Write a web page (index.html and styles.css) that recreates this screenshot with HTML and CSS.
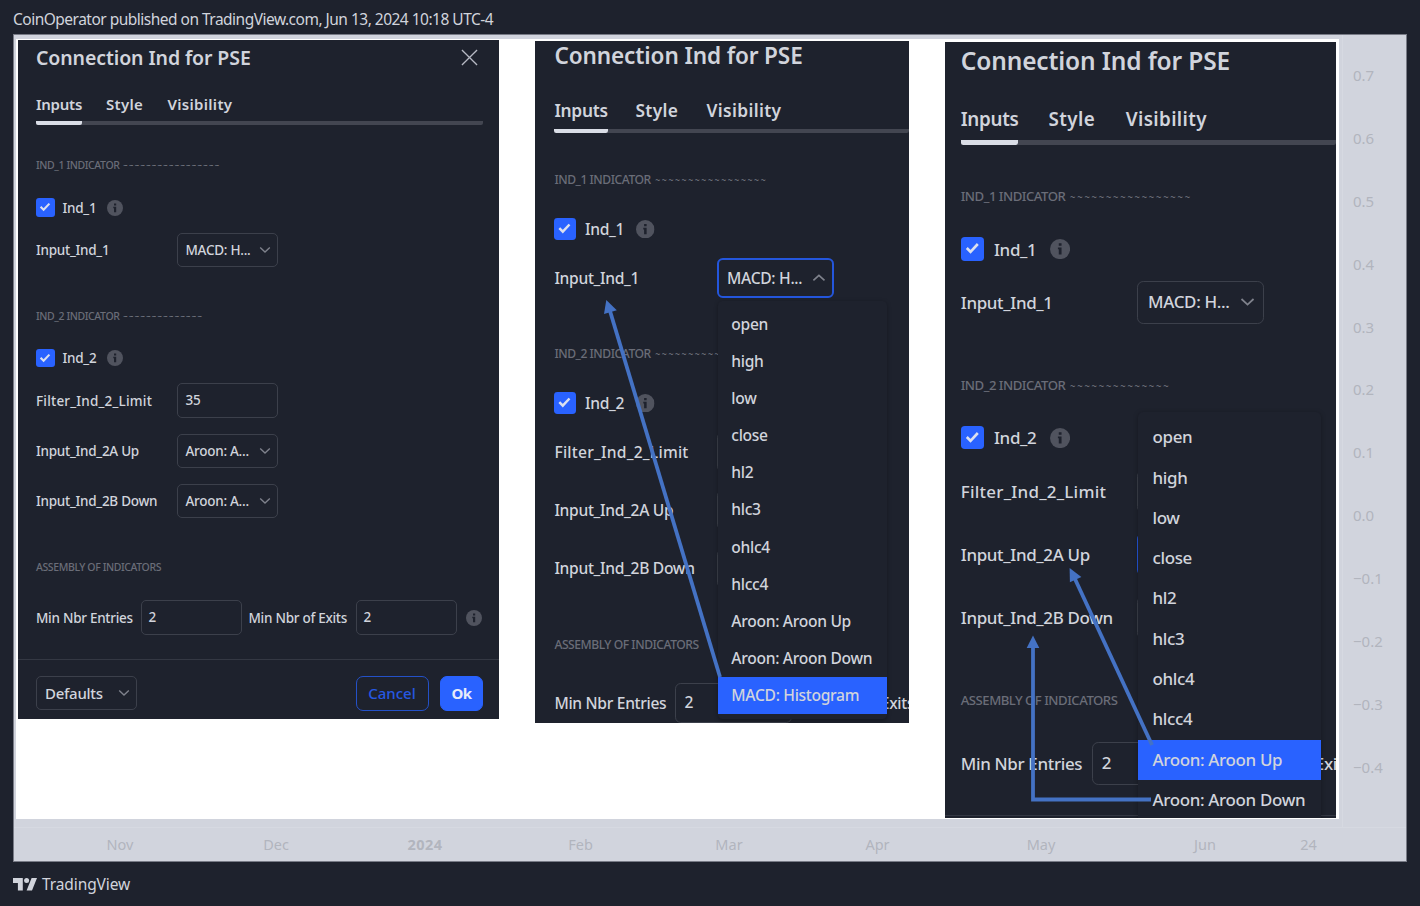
FILE: index.html
```
<!DOCTYPE html>
<html lang="en">
<head>
<meta charset="UTF-8">
<meta name="viewport" content="width=device-width, initial-scale=1.0">
<title>Connection Ind for PSE - TradingView</title>
<link rel="stylesheet" href="styles.css">
</head>
<body>

<!-- shared icons -->
<svg class="sprite" width="0" height="0">
    <symbol id="check" viewBox="0 0 18 18">
        <path d="M4.6 8.8l3 3 5.8-6.2" fill="none" stroke="#dbe0ef" stroke-width="2.1"/>
    </symbol>
    <symbol id="info" viewBox="0 0 16 16">
        <circle cx="8" cy="8" r="8" fill="#50535e"/>
        <path d="M7 3.4h2.2v2H7zM6.3 6.8h2.9v5.5H7V8.2h-.7z" fill="#1e222d"/>
    </symbol>
    <symbol id="chevron" viewBox="0 0 12 8">
        <path d="M1.2 1.6L6 6l4.8-4.4" fill="none" stroke="#7f828c" stroke-width="1.4"/>
    </symbol>
</svg>

<div class="page">
    <header class="publish-info">CoinOperator published on TradingView.com, Jun 13, 2024 10:18 UTC-4</header>

    <main class="chart">
        <div class="canvas">

            <section class="dialog dialog-full">
                <div class="title-row">
                    <h2>Connection Ind for PSE</h2>
                    <svg class="close" viewBox="0 0 18 18"><path d="M1 1l16 16M17 1L1 17" stroke="#b6b9c3" stroke-width="1.4"/></svg>
                </div>
                <nav class="tabs">
                    <span class="tab active">Inputs</span>
                    <span class="tab tab-style">Style</span>
                    <span class="tab">Visibility</span>
                </nav>
                <h3 class="first">IND_1 INDICATOR <span class="tildes">~~~~~~~~~~~~~~~~~</span></h3>
                <div class="check-row">
                    <span class="checkbox"><svg><use href="#check"/></svg></span>Ind_1<svg class="info"><use href="#info"/></svg>
                </div>
                <div class="row">
                    <label>Input_Ind_1</label>
                    <div class="select">MACD: H...<svg class="chevron"><use href="#chevron"/></svg></div>
                </div>
                <h3>IND_2 INDICATOR <span class="tildes">~~~~~~~~~~~~~~</span></h3>
                <div class="check-row">
                    <span class="checkbox"><svg><use href="#check"/></svg></span>Ind_2<svg class="info"><use href="#info"/></svg>
                </div>
                <div class="row">
                    <label class="wide">Filter_Ind_2_Limit</label>
                    <div class="field">35</div>
                </div>
                <div class="row spaced">
                    <label>Input_Ind_2A Up</label>
                    <div class="select">Aroon: A...<svg class="chevron"><use href="#chevron"/></svg></div>
                </div>
                <div class="row spaced">
                    <label>Input_Ind_2B Down</label>
                    <div class="select">Aroon: A...<svg class="chevron"><use href="#chevron"/></svg></div>
                </div>
                <h3>ASSEMBLY OF INDICATORS</h3>
                <div class="inline-row">
                    <label class="entries">Min Nbr Entries</label>
                    <div class="field">2</div>
                    <label class="exits">Min Nbr of Exits</label>
                    <div class="field">2</div>
                    <svg class="info"><use href="#info"/></svg>
                </div>
                <footer class="dialog-footer">
                    <div class="defaults">Defaults<svg class="chevron"><use href="#chevron"/></svg></div>
                    <button class="cancel">Cancel</button>
                    <button class="ok">Ok</button>
                </footer>
            </section>

            <section class="dialog dialog-macd">
                <div class="title-row">
                    <h2>Connection Ind for PSE</h2>
                </div>
                <nav class="tabs">
                    <span class="tab active">Inputs</span>
                    <span class="tab tab-style">Style</span>
                    <span class="tab">Visibility</span>
                </nav>
                <h3 class="first">IND_1 INDICATOR <span class="tildes">~~~~~~~~~~~~~~~~~</span></h3>
                <div class="check-row">
                    <span class="checkbox"><svg><use href="#check"/></svg></span>Ind_1<svg class="info"><use href="#info"/></svg>
                </div>
                <div class="row">
                    <label>Input_Ind_1</label>
                    <div class="select open">MACD: H...<svg class="chevron up"><use href="#chevron"/></svg>
                        <ul class="menu">
                            <li>open</li>
                            <li>high</li>
                            <li>low</li>
                            <li>close</li>
                            <li>hl2</li>
                            <li>hlc3</li>
                            <li>ohlc4</li>
                            <li>hlcc4</li>
                            <li>Aroon: Aroon Up</li>
                            <li>Aroon: Aroon Down</li>
                            <li class="selected">MACD: Histogram</li>
                        </ul>
                    </div>
                </div>
                <h3>IND_2 INDICATOR <span class="tildes">~~~~~~~~~~</span></h3>
                <div class="check-row">
                    <span class="checkbox"><svg><use href="#check"/></svg></span>Ind_2<svg class="info"><use href="#info"/></svg>
                </div>
                <div class="row">
                    <label class="wide">Filter_Ind_2_Limit</label>
                    <div class="field"></div>
                </div>
                <div class="row spaced">
                    <label>Input_Ind_2A Up</label>
                    <div class="select"></div>
                </div>
                <div class="row spaced">
                    <label>Input_Ind_2B Down</label>
                    <div class="select"></div>
                </div>
                <h3>ASSEMBLY OF INDICATORS</h3>
                <div class="inline-row">
                    <label class="entries">Min Nbr Entries</label>
                    <div class="field">2</div>
                    <label class="exits">Min Nbr of Exits</label>
                </div>
            </section>

            <section class="dialog dialog-aroon">
                <div class="title-row">
                    <h2>Connection Ind for PSE</h2>
                </div>
                <nav class="tabs">
                    <span class="tab active">Inputs</span>
                    <span class="tab tab-style">Style</span>
                    <span class="tab">Visibility</span>
                </nav>
                <h3 class="first">IND_1 INDICATOR <span class="tildes">~~~~~~~~~~~~~~~~~</span></h3>
                <div class="check-row">
                    <span class="checkbox"><svg><use href="#check"/></svg></span>Ind_1<svg class="info"><use href="#info"/></svg>
                </div>
                <div class="row">
                    <label>Input_Ind_1</label>
                    <div class="select">MACD: H...<svg class="chevron"><use href="#chevron"/></svg></div>
                </div>
                <h3>IND_2 INDICATOR <span class="tildes">~~~~~~~~~~~~~~</span></h3>
                <div class="check-row">
                    <span class="checkbox"><svg><use href="#check"/></svg></span>Ind_2<svg class="info"><use href="#info"/></svg>
                </div>
                <div class="row">
                    <label class="wide">Filter_Ind_2_Limit</label>
                    <div class="field"></div>
                </div>
                <div class="row spaced">
                    <label>Input_Ind_2A Up</label>
                    <div class="select open">
                        <ul class="menu menu-over">
                            <li>open</li>
                            <li>high</li>
                            <li>low</li>
                            <li>close</li>
                            <li>hl2</li>
                            <li>hlc3</li>
                            <li>ohlc4</li>
                            <li>hlcc4</li>
                            <li class="selected">Aroon: Aroon Up</li>
                            <li>Aroon: Aroon Down</li>
                        </ul>
                    </div>
                </div>
                <div class="row spaced">
                    <label>Input_Ind_2B Down</label>
                    <div class="select"></div>
                </div>
                <h3>ASSEMBLY OF INDICATORS</h3>
                <div class="inline-row">
                    <label class="entries">Min Nbr Entries</label>
                    <div class="field">2</div>
                    <label class="exits">Min Nbr of Exits</label>
                </div>
                <footer class="dialog-footer"></footer>
            </section>

            <!-- arrows from the menu items to their inputs -->
            <svg class="arrows" viewBox="16 39 1323 780">
                <g fill="none" stroke="#4472c4" stroke-width="3.8">
                    <path d="M720 677L610 311"/>
                    <path d="M1152 745L1075 579"/>
                    <path d="M1151 799.5H1033V647"/>
                </g>
                <g fill="#4472c4">
                    <path d="M606.3 300L604 314l12.8-3.8z"/>
                    <path d="M1069.6 568l.3 14.3 11.5-5.4z"/>
                    <path d="M1033 635.5l-6.3 12.5h12.6z"/>
                </g>
            </svg>
        </div>

        <div class="price-axis">
            <span>0.7</span>
            <span>0.6</span>
            <span>0.5</span>
            <span>0.4</span>
            <span>0.3</span>
            <span>0.2</span>
            <span>0.1</span>
            <span>0.0</span>
            <span>−0.1</span>
            <span>−0.2</span>
            <span>−0.3</span>
            <span>−0.4</span>
        </div>

        <div class="time-axis">
            <span>Nov</span>
            <span>Dec</span>
            <span class="year">2024</span>
            <span>Feb</span>
            <span>Mar</span>
            <span>Apr</span>
            <span>May</span>
            <span>Jun</span>
            <span>24</span>
        </div>
    </main>

    <footer class="brand">
        <svg width="24" height="13" viewBox="0 0 24 13">
            <path d="M0 0h9.8v12.5H4.9V5H0z" fill="#d1d4dc"/>
            <circle cx="13.6" cy="2.5" r="2.5" fill="#d1d4dc"/>
            <path d="M18.6 0H24l-5 12.5h-5.4z" fill="#d1d4dc"/>
        </svg>
        <span>TradingView</span>
    </footer>
</div>

</body>
</html>
```
FILE: styles.css
```
* {
    box-sizing: border-box;
}

body {
    margin: 0;
    background: #1e222d;
    color: #d1d4dc;
    font-family: "Noto Sans", "Trebuchet MS", sans-serif;
}

h2, h3, ul {
    margin: 0;
    padding: 0;
    list-style: none;
}

.sprite {
    display: block;
}

.page {
    height: 906px;
    padding: 0 13px;
    overflow: hidden;
}

.publish-info {
    height: 34px;
    padding-top: 6px;
    font-size: 15.5px;
    line-height: 26px;
    letter-spacing: -0.51px;
}

/* chart frame */
.chart {
    display: grid;
    grid-template-columns: 1328px 1fr;
    grid-template-rows: 792px 1fr;
    width: 1394px;
    height: 828px;
    border: 1px solid #787b86;
    background: #d1d4dd;
}

.canvas {
    position: relative;
    display: flex;
    align-items: flex-start;
    width: 1323px;
    height: 780px;
    margin: 4px 0 0 2px;
    padding-left: 2px;
    background: #fff;
}

.arrows {
    position: absolute;
    z-index: 3;
    left: 0;
    top: 0;
    width: 1323px;
    height: 780px;
}

.price-axis {
    display: flex;
    flex-direction: column;
    padding: 9px 0 0 10px;
    border-left: 1px solid #d6d9e1;
    color: #b2b5be;
    font-size: 15px;
}

.price-axis span {
    height: 62.9px;
    line-height: 62.9px;
}

.time-axis {
    display: grid;
    grid-column: 1 / 3;
    grid-template-columns: 156px 156px 142px 169px 128px 169px 158px 170px 37px;
    padding-left: 28px;
    border-top: 1px solid #d6d9e1;
    color: #b2b5be;
    font-size: 14.5px;
    line-height: 32px;
    text-align: center;
}

.year {
    font-weight: 700;
    letter-spacing: 0.4px;
}

/* settings dialog */
.dialog {
    flex: none;
    overflow: hidden;
    background: #1e222d;
    font-size: 13.5px;
    font-weight: 500;
    letter-spacing: -0.27px;
    white-space: nowrap;
}

.dialog-full {
    width: 481px;
    height: 678.5px;
    margin-top: 1px;
    padding: 0 16px 0 18px;
}

.dialog-macd {
    zoom: 1.157;
    width: 323px;
    height: 589.5px;
    margin: 1.7px 0 0 31.5px;
    padding-left: 16.4px;
}

.dialog-aroon {
    zoom: 1.255;
    width: 312px;
    height: 618.5px;
    margin: 2.4px 0 0 28.4px;
    padding-left: 12.7px;
}

.title-row {
    display: flex;
    align-items: center;
    justify-content: space-between;
    height: 35px;
}

h2 {
    font-size: 19.5px;
    font-weight: 600;
    letter-spacing: -0.1px;
}

.close {
    width: 17px;
    height: 17px;
    margin-right: 5.5px;
}

/* the full width line is 4px, the active tab overlaps it */
.tabs {
    display: flex;
    gap: 24px;
    height: 50px;
    padding-top: 14px;
    border-bottom: 4px solid #434651;
    border-radius: 2px;
    font-size: 15px;
    font-weight: 600;
    line-height: 31px;
}

.tab {
    height: 36px;
    letter-spacing: 0.3px;
}

.tab.active {
    width: 46px;
    border-bottom: 4px solid #dadde6;
    border-radius: 2px;
    letter-spacing: -0.25px;
}

.tab-style {
    width: 37.5px;
}

/* the two cropped dialogs cut the header at a different height */
.dialog-macd .title-row {
    height: 25px;
}

.dialog-aroon .title-row {
    height: 29.5px;
}

.dialog-macd .tabs {
    height: 54.5px;
    padding-top: 21.5px;
}

.dialog-aroon .tabs {
    height: 52.5px;
    padding-top: 19.5px;
}

.dialog-macd .tab,
.dialog-aroon .tab {
    height: 33px;
    line-height: 27px;
}

h3 {
    height: 20px;
    margin-top: 38.5px;
    color: #6a6d78;
    font-size: 10.5px;
    font-weight: 500;
    line-height: 21px;
    letter-spacing: -0.4px;
}

h3.first {
    margin-top: 30px;
}

.dialog-macd h3.first,
.dialog-aroon h3.first {
    margin-top: 30.5px;
}

.tildes {
    margin-left: 1.5px;
    font-size: 7.5px;
    font-weight: 700;
    letter-spacing: 1.42px;
    vertical-align: 1px;
}

.check-row {
    display: flex;
    align-items: center;
    height: 34px;
    margin-top: 15.5px;
}

.checkbox {
    width: 18.5px;
    height: 18.5px;
    margin-right: 8px;
    border-radius: 3px;
    background: #2962ff;
}

.checkbox svg {
    display: block;
    width: 18px;
    height: 18px;
}

.info {
    width: 16px;
    height: 16px;
    margin-left: 10.5px;
}

.row {
    display: flex;
    align-items: center;
    height: 34px;
    margin-top: 8.5px;
}

.row.spaced {
    margin-top: 16.3px;
}

.row label {
    width: 140.5px;
}

.row .wide {
    letter-spacing: 0.2px;
}

.field,
.select,
.defaults {
    width: 101px;
    height: 34.5px;
    padding: 0 8px;
    border: 1px solid #3c404b;
    border-radius: 5px;
    line-height: 32px;
}

.select,
.defaults {
    position: relative;
    display: flex;
    align-items: center;
    justify-content: space-between;
}

.select.open {
    border: 2px solid #2456dc;
    padding: 0 7px;
}

.chevron {
    width: 12px;
    height: 8px;
    margin-right: -2px;
}

.chevron.up {
    transform: rotate(180deg);
}

.menu {
    position: absolute;
    z-index: 2;
    left: -1px;
    top: 35px;
    width: 146.3px;
    padding: 4.5px 0;
    border-radius: 4px;
    background: #1e222d;
    box-shadow: 0 1px 4px rgba(0, 0, 0, 0.3);
}

.menu-over {
    top: -98px;
}

.menu li {
    height: 32.1px;
    padding-left: 11.7px;
    line-height: 31.5px;
}

.menu .selected {
    background: #2962ff;
}

.inline-row {
    display: flex;
    align-items: center;
    height: 34px;
    margin-top: 24px;
}

.inline-row .field {
    flex: none;
    padding-left: 7px;
}

.entries {
    flex: none;
    width: 104.5px;
}

.exits {
    flex: none;
    width: 114px;
    padding-left: 7px;
}

.inline-row .info {
    margin-left: 9.5px;
}

.dialog-footer {
    display: flex;
    align-items: center;
    height: 60px;
    margin: 24px -16px 0 -18px;
    padding: 8px 16px 0 18px;
    border-top: 1px solid #343843;
    font-size: 15px;
}

.defaults {
    margin-right: auto;
}

button {
    height: 35px;
    padding: 0;
    border: 1px solid #2451c8;
    border-radius: 7px;
    font: inherit;
    letter-spacing: 0;
}

.cancel {
    width: 73px;
    margin-right: 11.5px;
    background: none;
    color: #2658e2;
}

.ok {
    width: 43px;
    border-color: #2962ff;
    background: #2962ff;
    color: #e6ebfa;
    font-weight: 700;
    letter-spacing: -0.5px;
}

.brand {
    display: flex;
    align-items: center;
    gap: 5px;
    height: 44px;
    font-size: 15.5px;
    letter-spacing: -0.1px;
}
```
